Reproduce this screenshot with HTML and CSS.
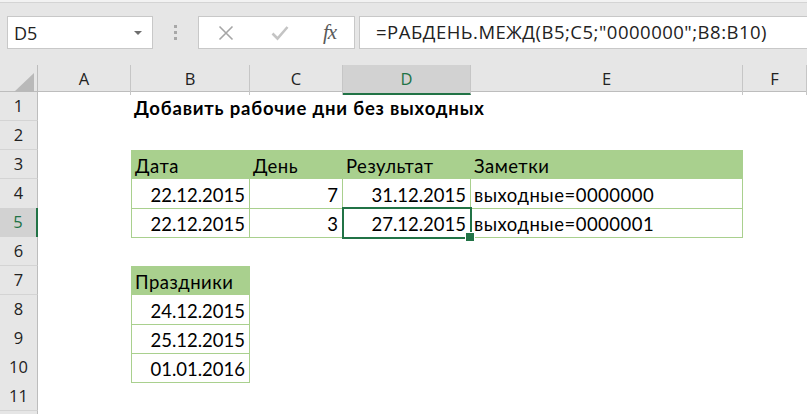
FILE: index.html
```html
<!DOCTYPE html>
<html>

<head>
    <meta charset="utf-8">
    <title>РАБДЕНЬ.МЕЖД</title>
    <link rel="stylesheet" href="styles.css">
</head>

<body>
    <div class="toolbar">
        <div class="namebox">
            <span class="ref">D5</span>
            <span class="caret"></span>
        </div>
        <div class="grip"><i></i><i></i><i></i></div>
        <div class="buttons">
            <svg class="icon" width="16" height="16" viewBox="0 0 16 16">
                <path d="M1.5 1.5 L14.5 14.5 M14.5 1.5 L1.5 14.5" stroke="#a6a6a6" stroke-width="1.6" fill="none" />
            </svg>
            <svg class="icon" width="18" height="16" viewBox="0 0 18 16">
                <path d="M1.5 8.5 L6.5 13.5 L16.5 2" stroke="#c4c4c4" stroke-width="2.6" fill="none" />
            </svg>
            <span class="fx">fx</span>
        </div>
        <div class="formula">=РАБДЕНЬ.МЕЖД(B5;C5;"0000000";B8:B10)</div>
    </div>

    <div class="sheet">
        <div class="row head">
            <div class="corner"><div class="tri"></div></div>
            <div class="ch">A</div>
            <div class="ch">B</div>
            <div class="ch">C</div>
            <div class="ch active">D</div>
            <div class="ch">E</div>
            <div class="ch">F</div>
        </div>
        <div class="row">
            <div class="rh">1</div>
            <div class="c"></div>
            <div class="c title">Добавить рабочие дни без выходных</div>
            <div class="c"></div><div class="c"></div><div class="c"></div><div class="c"></div>
        </div>
        <div class="row">
            <div class="rh">2</div>
            <div class="c"></div><div class="c"></div><div class="c"></div><div class="c"></div><div class="c"></div><div class="c"></div>
        </div>
        <div class="row">
            <div class="rh">3</div>
            <div class="c"></div>
            <div class="c th first">Дата</div>
            <div class="c th">День</div>
            <div class="c th">Результат</div>
            <div class="c th">Заметки</div>
            <div class="c"></div>
        </div>
        <div class="row">
            <div class="rh">4</div>
            <div class="c"></div>
            <div class="c tb first num">22.12.2015</div>
            <div class="c tb num">7</div>
            <div class="c tb num">31.12.2015</div>
            <div class="c tb note">выходные=0000000</div>
            <div class="c"></div>
        </div>
        <div class="row">
            <div class="rh active">5</div>
            <div class="c"></div>
            <div class="c tb first num">22.12.2015</div>
            <div class="c tb num">3</div>
            <div class="c tb num sel">27.12.2015</div>
            <div class="c tb note">выходные=0000001</div>
            <div class="c"></div>
        </div>
        <div class="row">
            <div class="rh">6</div>
            <div class="c"></div><div class="c"></div><div class="c"></div><div class="c"></div><div class="c"></div><div class="c"></div>
        </div>
        <div class="row">
            <div class="rh">7</div>
            <div class="c"></div>
            <div class="c th first">Праздники</div>
            <div class="c"></div><div class="c"></div><div class="c"></div><div class="c"></div>
        </div>
        <div class="row">
            <div class="rh">8</div>
            <div class="c"></div>
            <div class="c tb first num">24.12.2015</div>
            <div class="c"></div><div class="c"></div><div class="c"></div><div class="c"></div>
        </div>
        <div class="row">
            <div class="rh">9</div>
            <div class="c"></div>
            <div class="c tb first num">25.12.2015</div>
            <div class="c"></div><div class="c"></div><div class="c"></div><div class="c"></div>
        </div>
        <div class="row">
            <div class="rh">10</div>
            <div class="c"></div>
            <div class="c tb first num">01.01.2016</div>
            <div class="c"></div><div class="c"></div><div class="c"></div><div class="c"></div>
        </div>
        <div class="row">
            <div class="rh">11</div>
            <div class="c"></div><div class="c"></div><div class="c"></div><div class="c"></div><div class="c"></div><div class="c"></div>
        </div>
        <div class="row">
            <div class="rh"></div>
            <div class="c"></div><div class="c"></div><div class="c"></div><div class="c"></div><div class="c"></div><div class="c"></div>
        </div>
    </div>
</body>

</html>
```

FILE: styles.css
```css
* {
    box-sizing: border-box;
}

html,
body {
    margin: 0;
    padding: 0;
    height: 414px;
    overflow: hidden;
}

body {
    background: #fff;
    font-family: "Lato", "Open Sans", sans-serif;
    color: #000;
}

/* formula bar */

.toolbar {
    display: flex;
    align-items: flex-start;
    height: 65px;
    padding: 14px 0 0 7px;
    background: #e6e6e6;
    border-top: 2px solid #f2f2f2;
    box-shadow: inset 0 1px 0 #d4d4d4;
}

.namebox {
    display: flex;
    align-items: center;
    justify-content: space-between;
    width: 146px;
    height: 33px;
    padding: 0 10px 0 6px;
    background: #fff;
    border: 1px solid #c8c8c8;
    font-family: "Open Sans", sans-serif;
    font-size: 18px;
    color: #222;
}

.caret {
    width: 0;
    height: 0;
    border-left: 4px solid transparent;
    border-right: 4px solid transparent;
    border-top: 4px solid #6e6e6e;
}

.grip {
    display: flex;
    flex-direction: column;
    gap: 3px;
    width: 45px;
    height: 33px;
    padding-top: 9px;
    align-items: center;
}

.grip i {
    width: 3px;
    height: 3px;
    background: #a8a8a8;
}

.buttons {
    display: flex;
    align-items: center;
    width: 157px;
    height: 33px;
    padding-left: 19px;
    background: #fff;
    border: 1px solid #c8c8c8;
}

.buttons .icon:nth-child(2) {
    margin-left: 37px;
}

.fx {
    margin-left: 34px;
    font-family: "Liberation Serif", serif;
    font-style: italic;
    font-size: 21px;
    color: #5a5a5a;
    letter-spacing: -1px;
}

.formula {
    flex: 1;
    height: 33px;
    margin-left: 4px;
    padding-left: 16px;
    background: #fff;
    border: 1px solid #c8c8c8;
    border-right: none;
    font-family: "Open Sans", sans-serif;
    font-size: 18.5px;
    letter-spacing: 0.5px;
    line-height: 30px;
    color: #222;
    white-space: nowrap;
}

/* sheet */

.row {
    display: grid;
    grid-template-columns: 38px 93px 119px 93px 128px 272px 64px;
    height: 29px;
}

.head {
    height: 27px;
    background: #e6e6e6;
    border-bottom: 1px solid #bdbdbd;
}

.corner {
    display: flex;
    justify-content: flex-end;
    align-items: flex-end;
    padding: 0 3px 3px 0;
    border-right: 1px solid #bdbdbd;
}

.tri {
    width: 20px;
    height: 19px;
    background: #b9b9b9;
    clip-path: polygon(100% 0, 100% 100%, 0 100%);
}

.ch {
    border-right: 1px solid #c6c6c6;
    text-align: center;
    font-family: "Open Sans", sans-serif;
    font-size: 16.5px;
    line-height: 28px;
    color: #222;
}

.ch.active {
    background: #d2d2d2;
    color: #217346;
    border-bottom: 2px solid #217346;
}

.rh {
    background: #e6e6e6;
    border-right: 1px solid #bdbdbd;
    border-bottom: 1px solid #d4d4d4;
    text-align: center;
    font-family: "Open Sans", sans-serif;
    font-size: 16.5px;
    line-height: 28px;
    color: #222;
}

.rh.active {
    background: #d2d2d2;
    color: #217346;
    border-right: 2px solid #217346;
}

.c {
    padding: 3px 4px 0 3px;
    font-size: 18.5px;
    line-height: 26px;
    white-space: nowrap;
}

.title {
    font-weight: bold;
    letter-spacing: 0.8px;
}

.th {
    background: #a9d08e;
    border-right: 1px solid #a9d08e;
    letter-spacing: 0.5px;
}

.tb {
    border-right: 1px solid #a9d08e;
    border-bottom: 1px solid #a9d08e;
}

.note {
    letter-spacing: 0.5px;
}

.first {
    border-left: 1px solid #a9d08e;
}

.num {
    text-align: right;
}

.sel {
    position: relative;
    outline: 2px solid #217346;
    outline-offset: -1px;
}

.sel::after {
    content: "";
    position: absolute;
    right: -5px;
    bottom: -5px;
    width: 8px;
    height: 8px;
    background: #217346;
    border: 1px solid #fff;
}
```
